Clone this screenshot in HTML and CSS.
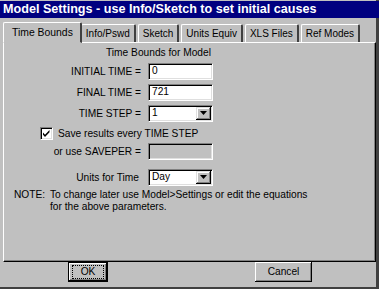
FILE: index.html
```html
<!DOCTYPE html>
<html lang="en">
<head>
  <meta charset="utf-8" />
  <title>Model Settings</title>
  <link rel="stylesheet" href="styles.css">
</head>
<body>
  <div class="win">
    <div class="titlebar">Model Settings - use Info/Sketch to set initial causes</div>

    <div class="tabs">
      <div class="tab active">Time Bounds</div>
      <div class="tab">Info/Pswd</div>
      <div class="tab">Sketch</div>
      <div class="tab">Units Equiv</div>
      <div class="tab">XLS Files</div>
      <div class="tab">Ref Modes</div>
    </div>

    <div class="panel">
      <div class="heading">Time Bounds for Model</div>

      <div class="form">
        <label>INITIAL TIME =</label>
        <div class="field">0</div>

        <label>FINAL TIME =</label>
        <div class="field">721</div>

        <label>TIME STEP =</label>
        <div class="field combo">1<span class="drop"><svg width="7" height="4" viewBox="0 0 7 4"><path d="M0 0h7L3.5 4z" fill="#000"/></svg></span></div>

        <div class="check-row">
          <span class="check"><svg width="9" height="9" viewBox="0 0 9 9"><path d="M1 3.5l2 2.2L7.5 1v2.3L3 8 1 5.7z" fill="#000"/></svg></span>
          Save results every TIME STEP
        </div>

        <label>or use SAVEPER =</label>
        <div class="field off"></div>

        <label class="units">Units for Time</label>
        <div class="field combo units-field">Day<span class="drop"><svg width="7" height="4" viewBox="0 0 7 4"><path d="M0 0h7L3.5 4z" fill="#000"/></svg></span></div>
      </div>

      <div class="note">
        <span>NOTE:</span>
        <span>To change later use Model&gt;Settings or edit the equations<br>for the above parameters.</span>
      </div>
    </div>

    <div class="buttons">
      <button class="btn default"><span class="focus">OK</span></button>
      <button class="btn cancel">Cancel</button>
    </div>
  </div>
</body>
</html>
```

FILE: styles.css
```css
:root {
  --face:#c0c0c0; --shadow:#808080; --hi:#ffffff; --dark:#000000; --navy:#000080;
}
*{box-sizing:border-box;margin:0;padding:0}
body{background:#fff;font-family:'Liberation Sans',Arial,sans-serif;font-size:10.2px;color:#000}

.win{width:379px;height:289px;background:var(--face);display:flex;flex-direction:column;
  border-right:3px solid #404040;border-bottom:2px solid #404040;padding-top:1px}
.titlebar{height:17px;margin-right:-3px;background:var(--navy);color:#fff;font-weight:700;font-size:12.6px;
  line-height:17px;padding-left:3px;white-space:nowrap;overflow:hidden}

/* tab strip */
.tabs{display:flex;align-items:flex-end;height:24px;padding-left:5px}
.tab{height:18px;line-height:17px;padding:0 4px;margin-right:2px;background:var(--face);font-size:10px;
  border-top:1px solid var(--hi);border-left:1px solid var(--hi);border-right:2px solid #404040;
  border-radius:2px 2px 0 0;white-space:nowrap;position:relative;z-index:0}
.tab.active{height:21px;line-height:19px;padding:0 7px 0 8px;margin:0 0 -1px -2px;z-index:2;
  border-bottom:1px solid var(--face);font-size:10.4px}
.tab:nth-child(2){margin-left:-1px}

.panel{height:221px;margin-left:3px;margin-right:0;border-top:1px solid var(--hi);border-left:1px solid var(--hi);
  border-right:1px solid var(--dark);border-bottom:1px solid var(--dark);
  box-shadow:inset -1px -1px 0 var(--shadow);position:relative;z-index:1}

.heading{padding:4px 0 0 102px;height:20px;line-height:12px}

.form{display:grid;grid-template-columns:137px 65px;column-gap:7px;row-gap:4px;align-items:center}
.form label{text-align:right;white-space:nowrap}
.field{height:17px;background:#fff;line-height:13px;padding-left:3px;
  border-top:1px solid var(--shadow);border-left:1px solid var(--shadow);
  border-right:1px solid var(--hi);border-bottom:1px solid var(--hi);
  box-shadow:inset 1px 1px 0 var(--dark),inset -1px -1px 0 #dfdfdf}
.field.off{background:var(--face)}
.combo{position:relative}
.drop{position:absolute;right:1px;top:1px;width:15px;height:13px;background:var(--face);
  display:flex;align-items:center;justify-content:center;
  box-shadow:inset -1px -1px 0 var(--dark),inset 1px 1px 0 #dfdfdf,inset -2px -2px 0 var(--shadow),inset 2px 2px 0 var(--hi)}

.check-row{grid-column:1 / 3;display:flex;align-items:center;gap:5px;padding-left:36px;height:16px;margin:0 0 -3px}
.check{width:13px;height:13px;background:#fff;display:flex;align-items:center;justify-content:center;
  border-top:1px solid var(--shadow);border-left:1px solid var(--shadow);
  border-right:1px solid var(--hi);border-bottom:1px solid var(--hi);
  box-shadow:inset 1px 1px 0 var(--dark),inset -1px -1px 0 #dfdfdf}
.units,.units-field{margin-top:5px}
.units{padding-right:2px}

.note{display:grid;grid-template-columns:36px auto;padding:3px 0 0 10px;line-height:12px}

.buttons{display:flex;height:25px;padding:0 0 0 68px}
.btn{font:inherit;color:#000;background:var(--face);height:20px;border:0;
  box-shadow:inset -1px -1px 0 var(--dark),inset 1px 1px 0 var(--hi),inset -2px -2px 0 var(--shadow)}
.btn.default{width:40px;border:1px solid var(--dark);padding:2px 3px}
.focus{display:block;border:1px dotted #000;line-height:12px}
.btn.cancel{width:57px;margin-left:147px;padding-bottom:1px}
```
